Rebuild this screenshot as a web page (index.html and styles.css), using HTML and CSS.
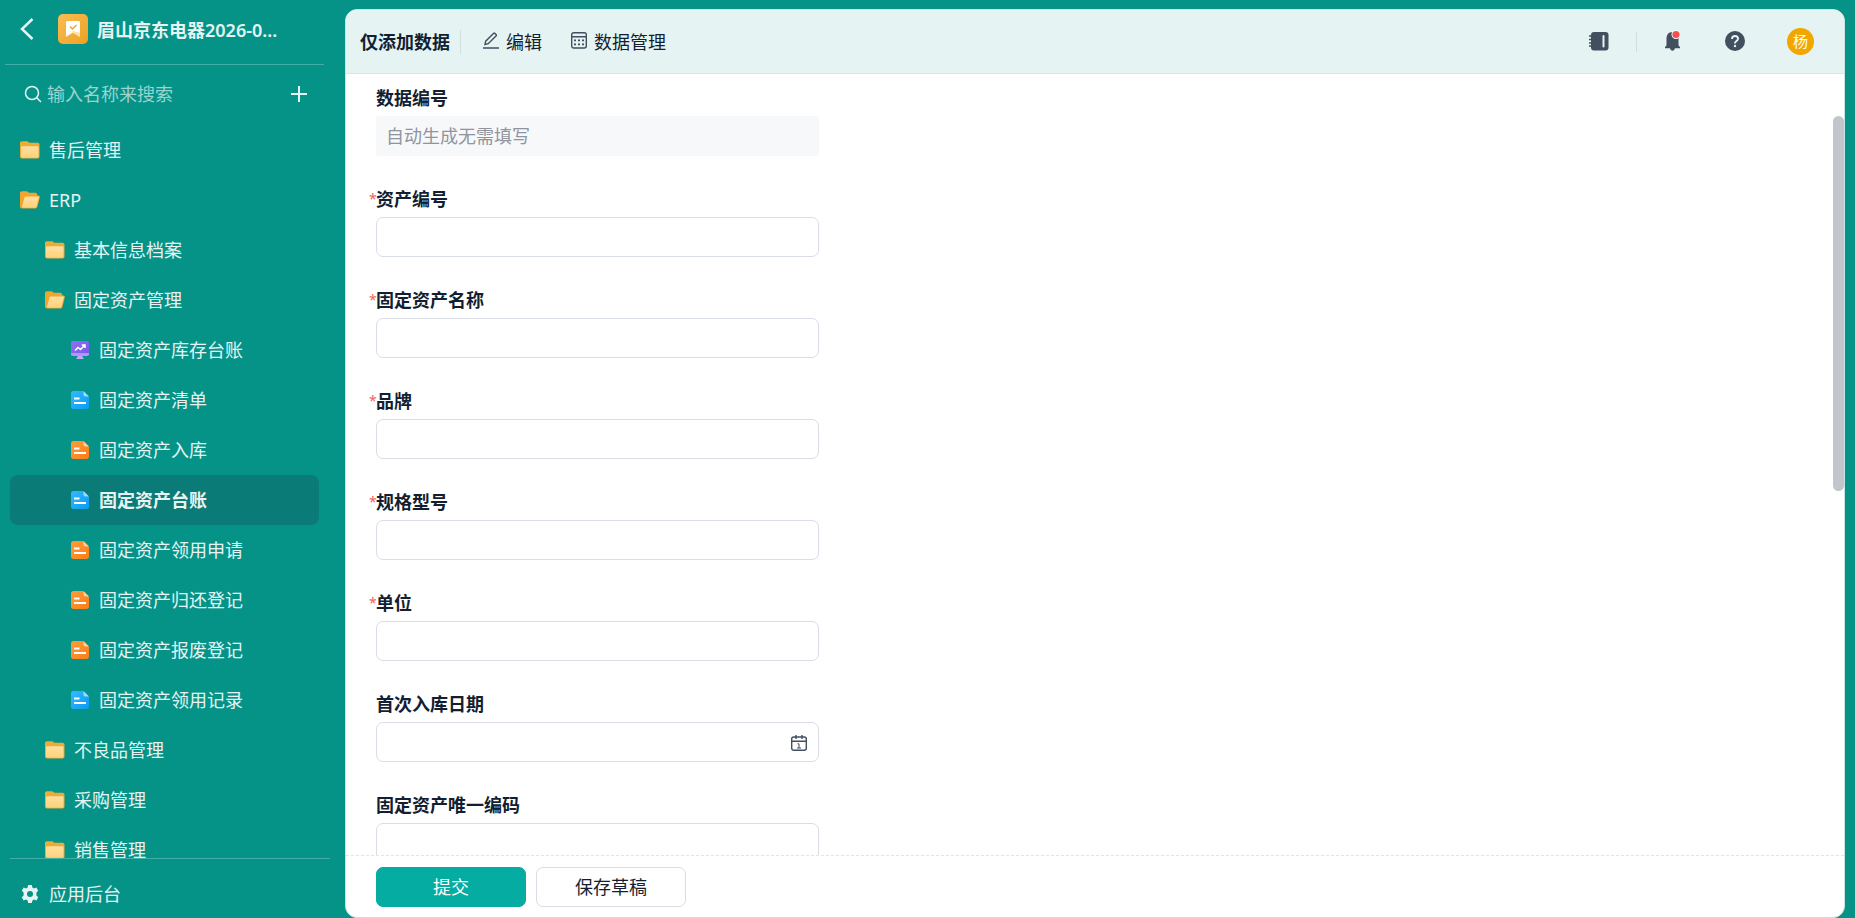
FILE: index.html
```html
<!DOCTYPE html>
<html lang="zh-CN">

<head>
    <meta charset="UTF-8" />
    <meta name="viewport" content="width=device-width, initial-scale=1.0" />
    <title>固定资产台账</title>
    <link rel="stylesheet" href="styles.css">
</head>

<body>
    <!-- shared icons -->
    <svg class="sprite" aria-hidden="true">
        <defs>
            <linearGradient id="gFolder" x1="0" y1="0" x2="0" y2="1">
                <stop offset="0" stop-color="#ffe0a0" />
                <stop offset="1" stop-color="#ffd27a" />
            </linearGradient>
            <linearGradient id="gBlue" x1="0" y1="0" x2="1" y2="1">
                <stop offset="0" stop-color="#35b9ff" />
                <stop offset="1" stop-color="#089cf0" />
            </linearGradient>
            <linearGradient id="gOrange" x1="0" y1="0" x2="1" y2="1">
                <stop offset="0" stop-color="#ff9b3d" />
                <stop offset="1" stop-color="#fb7f17" />
            </linearGradient>
            <linearGradient id="gPurple" x1="0" y1="0" x2="1" y2="1">
                <stop offset="0" stop-color="#9270f5" />
                <stop offset="1" stop-color="#7656e8" />
            </linearGradient>
            <linearGradient id="gApp" x1="0" y1="0" x2="1" y2="1">
                <stop offset="0" stop-color="#f9bd55" />
                <stop offset="1" stop-color="#eda122" />
            </linearGradient>
        </defs>
        <symbol id="folder" viewBox="0 0 20 18">
            <path d="M0 2.2C0 1 .8.3 2 .3h5c1.200 0 1.600 1.500 2.800 1.500H17.500c1.200 0 2 .8 2 2V15.500c0 1.300-.8 2-2 2H2c-1.200 0-2-.7-2-2z" fill="#f0ab35" />
            <path d="M1 6.500c0-.8.500-1.300 1.300-1.300h15c.8 0 1.200.5 1.200 1.300v9c0 .8-.5 1.200-1.200 1.200h-15c-.8 0-1.300-.4-1.300-1.200z" fill="url(#gFolder)" />
        </symbol>
        <symbol id="folder-open" viewBox="0 0 20 18">
            <path d="M0 2.2C0 1 .8.3 2 .3h4.500c1.200 0 1.600 1.500 2.800 1.500H15c1.400 0 2.200.8 2.200 2v.6h1c1.300 0 1.900.8 1.600 2l-2.400 9.300c-.3 1.200-1 1.800-2.200 1.800H2c-1.200 0-2-.7-2-2z" fill="#f0a52f" />
            <path d="M4.500 6.500c.2-.7.700-1.100 1.400-1.100h12c.8 0 1.100.5.900 1.200l-2.200 9c-.2.700-.7 1.100-1.400 1.100H3c-.9 0-1.200-.5-1-1.300z" fill="url(#gFolder)" />
        </symbol>
        <symbol id="doc-blue" viewBox="0 0 18 18">
            <path d="M2.500 0H12l6 6v9.500c0 1.500-1 2.500-2.500 2.500h-13C1 18 0 17 0 15.500v-13C0 1 1 0 2.500 0z" fill="url(#gBlue)" />
            <path d="M12.500 0L18 5.500h-3.500c-1.200 0-2-.8-2-2z" fill="#9bdcff" />
            <path d="M3 7.500h5.500M3 12h12" stroke="#fff" stroke-width="2" />
        </symbol>
        <symbol id="doc-orange" viewBox="0 0 18 18">
            <path d="M2.500 0H12l6 6v9.500c0 1.500-1 2.500-2.500 2.500h-13C1 18 0 17 0 15.500v-13C0 1 1 0 2.500 0z" fill="url(#gOrange)" />
            <path d="M12.500 0L18 5.500h-3.500c-1.200 0-2-.8-2-2z" fill="#ffd09c" />
            <path d="M3 7.500h5.500M3 12h12" stroke="#fff" stroke-width="2" />
        </symbol>
        <symbol id="board" viewBox="0 0 18 18">
            <path d="M6.500 14h5v2l1.500 2H5l1.500-2z" fill="#c0a8ff" />
            <rect width="18" height="15" rx="2" fill="url(#gPurple)" />
            <path d="M0 12h18v1c0 1.200-.8 2-2 2H2c-1.200 0-2-.8-2-2z" fill="#b294fb" />
            <path d="M4 9.500l3-3 2.500 2L14 4M10.800 4H14v3" fill="none" stroke="#fff" stroke-width="1.600" />
        </symbol>
    </svg>

    <aside class="sidebar">
        <div class="app-head">
            <button class="icon-btn back" type="button" aria-label="返回">
                <svg width="14" height="22" viewBox="0 0 14 22" fill="none" stroke="currentColor" stroke-width="2.500"><path d="M12.500 1L2 11l10.500 10" /></svg>
            </button>
            <svg class="app-icon" viewBox="0 0 30 30">
                <rect width="30" height="30" rx="5" fill="url(#gApp)" />
                <path d="M8 18h14v5l-7-4-7 4z" fill="#fbe0b0" />
                <path d="M8 8.500C8 7.500 8.500 7 9.500 7h11c1 0 1.500.5 1.500 1.500V18.500l-7-1-7 5z" fill="#fff" />
                <path d="M12 12.500l2.500 2.500 4-4" fill="none" stroke="#f0a52f" stroke-width="1.500" />
            </svg>
            <span class="app-name">眉山京东电器2026-0...</span>
        </div>
        <div class="search">
            <svg width="18" height="18" viewBox="0 0 18 18" fill="none" stroke="currentColor" stroke-width="1.500"><circle cx="8" cy="8" r="6.500" /><path d="M12.500 12.500L17 17" /></svg>
            <input type="text" placeholder="输入名称来搜索" aria-label="输入名称来搜索" />
            <button class="icon-btn" type="button" aria-label="新建">
                <svg width="16" height="16" viewBox="0 0 16 16" stroke="currentColor" stroke-width="2"><path d="M8 0v16M0 8h16" /></svg>
            </button>
        </div>
        <nav class="menu">
            <a href="#"><svg class="ico folder"><use href="#folder" /></svg>售后管理</a>
            <a href="#"><svg class="ico folder"><use href="#folder-open" /></svg>ERP</a>
            <a class="lv2" href="#"><svg class="ico folder"><use href="#folder" /></svg>基本信息档案</a>
            <a class="lv2" href="#"><svg class="ico folder"><use href="#folder-open" /></svg>固定资产管理</a>
            <a class="lv3" href="#"><svg class="ico"><use href="#board" /></svg>固定资产库存台账</a>
            <a class="lv3" href="#"><svg class="ico"><use href="#doc-blue" /></svg>固定资产清单</a>
            <a class="lv3" href="#"><svg class="ico"><use href="#doc-orange" /></svg>固定资产入库</a>
            <a class="lv3 active" href="#"><svg class="ico"><use href="#doc-blue" /></svg>固定资产台账</a>
            <a class="lv3" href="#"><svg class="ico"><use href="#doc-orange" /></svg>固定资产领用申请</a>
            <a class="lv3" href="#"><svg class="ico"><use href="#doc-orange" /></svg>固定资产归还登记</a>
            <a class="lv3" href="#"><svg class="ico"><use href="#doc-orange" /></svg>固定资产报废登记</a>
            <a class="lv3" href="#"><svg class="ico"><use href="#doc-blue" /></svg>固定资产领用记录</a>
            <a class="lv2" href="#"><svg class="ico folder"><use href="#folder" /></svg>不良品管理</a>
            <a class="lv2" href="#"><svg class="ico folder"><use href="#folder" /></svg>采购管理</a>
            <a class="lv2" href="#"><svg class="ico folder"><use href="#folder" /></svg>销售管理</a>
        </nav>
        <a class="backend" href="#">
            <svg width="18" height="18" viewBox="0 0 18 18" fill="currentColor"><path fill-rule="evenodd" d="M7.200 0h3.600l.6 2.500 1.500.9 2.500-.8 1.800 3.100L15.400 7.500v3l1.800 1.800-1.800 3.100-2.500-.8-1.500.9-.6 2.500H7.200l-.6-2.500-1.500-.9-2.500.8L.8 12.300l1.800-1.800v-3L.8 5.700l1.800-3.100 2.500.8 1.500-.9zM9 6a3 3 0 1 0 0 6 3 3 0 0 0 0-6z" /></svg>
            应用后台
        </a>
    </aside>

    <main class="panel">
        <header class="topbar">
            <h1>仅添加数据</h1>
            <button class="tool edit" type="button">
                <svg width="16" height="17" viewBox="0 0 16 17" fill="none" stroke="currentColor" stroke-width="1.400"><path d="M0 16h16M2 12.500l.7-3.300L10.500 1.400c.5-.5 1-.5 1.500 0l1 1c.5.5.5 1 0 1.500L5.200 11.700z" /></svg>
                编辑
            </button>
            <button class="tool" type="button">
                <svg width="16" height="17" viewBox="0 0 16 17" fill="none" stroke="currentColor" stroke-width="1.400"><rect x=".7" y=".7" width="14.600" height="15.300" rx="2" /><path d="M1 4.700h14" /><path d="M3 8.300h10M3 12.300h10" stroke-width="1.800" stroke-dasharray="2 2" /></svg>
                数据管理
            </button>
            <div class="actions">
                <button class="icon-btn" type="button" aria-label="通讯录">
                    <svg width="20" height="20" viewBox="0 0 20 20"><rect x="2" y="1" width="17.500" height="18.500" rx="3" fill="#424f5e" /><path d="M0 5h4M0 8.500h4M0 12h4M0 15h4" stroke="#424f5e" stroke-width="1.500" /><path d="M14.500 5v10.500" stroke="#e5f3f2" stroke-width="2" stroke-linecap="round" /></svg>
                </button>
                <span class="split"></span>
                <button class="icon-btn" type="button" aria-label="消息">
                    <svg width="16" height="21" viewBox="0 0 16 21"><path d="M7.500 2c4 0 6 2.800 6 6.500V15c0 1 1.500 1.500 1.500 2.500v.8h-5c-.3 1.400-1.300 2.400-2.500 2.400S5.300 19.700 5 18.300H0v-.8C0 16.500 1.500 16 1.500 15V8.500C1.500 4.800 3.500 2 7.500 2z" fill="#424f5e" /><circle cx="11" cy="4.500" r="4.500" fill="#f7f9f9" /><circle cx="11" cy="4.500" r="3.600" fill="#f5504f" /></svg>
                </button>
                <button class="icon-btn" type="button" aria-label="帮助">
                    <svg width="20" height="20" viewBox="0 0 20 20"><circle cx="10" cy="10" r="10" fill="#424f5e" /><path d="M7 8c0-2 1.300-3 3-3s3 1 3 2.700c0 2.200-3 2.300-3 4.500v.3" fill="none" stroke="#e5f3f2" stroke-width="1.900" /><circle cx="10" cy="15" r="1.200" fill="#e5f3f2" /></svg>
                </button>
                <button class="avatar" type="button">杨</button>
            </div>
        </header>

        <form class="form">
            <div class="body">
                <div class="fields">
                    <div class="field">
                        <label for="dataNo">数据编号</label>
                        <input id="dataNo" type="text" placeholder="自动生成无需填写" disabled />
                    </div>
                    <div class="field required">
                        <label for="assetNo">资产编号</label>
                        <input id="assetNo" type="text" />
                    </div>
                    <div class="field required">
                        <label for="assetName">固定资产名称</label>
                        <input id="assetName" type="text" />
                    </div>
                    <div class="field required">
                        <label for="brand">品牌</label>
                        <input id="brand" type="text" />
                    </div>
                    <div class="field required">
                        <label for="model">规格型号</label>
                        <input id="model" type="text" />
                    </div>
                    <div class="field required">
                        <label for="unit">单位</label>
                        <input id="unit" type="text" />
                    </div>
                    <div class="field">
                        <label for="firstDate">首次入库日期</label>
                        <div class="date">
                            <input id="firstDate" type="text" />
                            <svg width="16" height="16" viewBox="0 0 16 16" fill="none" stroke="currentColor" stroke-width="1.400"><rect x=".7" y="2" width="14.600" height="13.300" rx="2" /><path d="M5 0v4M11 0v4M1 6.200h14" /><path d="M6.500 8.800H8V13M6 13h4" stroke-width="1" /></svg>
                        </div>
                    </div>
                    <div class="field">
                        <label for="uniqueCode">固定资产唯一编码</label>
                        <input id="uniqueCode" type="text" />
                    </div>
                </div>
                <span class="thumb"></span>
            </div>
            <footer class="submit-bar">
                <button class="btn primary" type="submit">提交</button>
                <button class="btn" type="button">保存草稿</button>
            </footer>
        </form>
    </main>
</body>

</html>
```
FILE: styles.css
```css
* {
  box-sizing: border-box;
}

body {
  display: flex;
  height: 100vh;
  margin: 0;
  overflow: hidden;
  background-color: #059388;
  color: #141e31;
  font-family: "Noto Sans", "Noto Sans CJK SC", sans-serif;
  font-size: 18px;
  line-height: 24px;
}

button,
input {
  font: inherit;
  color: inherit;
}

button {
  padding: 0;
  border: none;
  background: none;
  cursor: pointer;
}

svg {
  display: block;
  flex: none;
}

a {
  color: inherit;
  text-decoration: none;
}

.sprite {
  position: absolute;
  width: 0;
  height: 0;
}

.icon-btn {
  display: flex;
}

/* sidebar */
.sidebar {
  display: flex;
  flex-direction: column;
  flex: none;
  width: 345px;
  color: #e6f4f3;
}

.app-head {
  display: flex;
  align-items: center;
  flex: none;
  height: 65px;
  margin: 0 21px 0 5px;
  padding: 0 0 6px 15px;
  border-bottom: 1px solid #43aea6;
}

.app-icon {
  width: 30px;
  height: 30px;
  margin: 0 9px 0 24px;
}

.app-name {
  padding-top: 2px;
  font-weight: 600;
  white-space: nowrap;
}

.search {
  display: flex;
  align-items: center;
  gap: 5px;
  flex: none;
  height: 60px;
  padding: 0 38px 2px 24px;
}

.search input {
  flex: 1;
  min-width: 0;
  padding: 0;
  border: none;
  outline: none;
  background: none;
}

.search input::placeholder {
  color: #9bd4cf;
  opacity: 1;
}

.menu {
  flex: 1;
  min-height: 0;
  overflow: hidden;
  padding: 0 26px 0 10px;
}

.menu a {
  display: flex;
  align-items: center;
  gap: 9px;
  height: 50px;
  padding-left: 10px;
  border-radius: 8px;
  white-space: nowrap;
}

.menu .lv2 {
  padding-left: 35px;
}

.menu .lv3 {
  gap: 10px;
  padding-left: 61px;
}

.menu .active {
  background-color: #0a7b76;
  font-weight: bold;
}

.ico {
  width: 18px;
  height: 18px;
}

.ico.folder {
  width: 20px;
}

.backend {
  display: flex;
  align-items: center;
  gap: 10px;
  flex: none;
  height: 60px;
  margin: 0 15px 0 10px;
  padding: 10px 0 0 11px;
  border-top: 1px solid #43aea6;
}

/* main panel */
.panel {
  display: flex;
  flex-direction: column;
  flex: 1;
  min-width: 0;
  margin: 9px 10px 0 0;
  border: 1px solid #c6e5e2;
  border-radius: 12px;
  overflow: hidden;
  background-color: #fff;
}

.topbar {
  display: flex;
  align-items: center;
  flex: none;
  height: 64px;
  padding: 0 30px 0 14px;
  border-bottom: 1px solid #dde3e7;
  background-color: #e5f3f2;
}

.topbar h1 {
  margin: 0;
  padding-right: 10px;
  border-right: 1px solid #d3dedf;
  font-size: 18px;
  line-height: 24px;
}

.tool {
  display: flex;
  align-items: center;
  gap: 7px;
  margin-left: 29px;
}

.tool.edit {
  margin-left: 22px;
}

.tool svg {
  margin-bottom: 2px;
  color: #424f5e;
}

.actions {
  display: flex;
  align-items: center;
  margin-left: auto;
}

.actions .icon-btn {
  padding-bottom: 2px;
}

.split {
  width: 1px;
  height: 20px;
  margin: 0 28px 0 27px;
  background-color: #d3dedf;
}

.actions .icon-btn + .icon-btn {
  margin-left: 44px;
}

.avatar {
  width: 27px;
  height: 27px;
  margin-left: 42px;
  border-radius: 50%;
  background-color: #f2a600;
  color: #fff;
  font-size: 15px;
  line-height: 27px;
}

/* form */
.form {
  display: flex;
  flex-direction: column;
  flex: 1;
  min-height: 0;
}

.body {
  position: relative;
  flex: 1;
  min-height: 0;
  overflow: hidden;
  padding: 12px 30px 0;
}

.fields {
  display: grid;
  gap: 31px;
  width: calc(30% + 12px);
}

.field label {
  display: block;
  margin-bottom: 6px;
  font-weight: bold;
}

.required label {
  position: relative;
}

.required label::before {
  content: "*";
  position: absolute;
  left: -7px;
  color: #f56060;
  font-size: 14px;
  font-weight: normal;
}

.field input {
  display: block;
  width: 100%;
  height: 40px;
  padding: 0 9px;
  border: 1px solid #d9dde5;
  border-radius: 7px;
  background-color: #fff;
}

.field input:disabled {
  border-color: #f7f8fa;
  border-radius: 2px;
  background-color: #f7f8fa;
}

.field input::placeholder {
  color: #8f949f;
  opacity: 1;
}

.date {
  position: relative;
}

.date svg {
  position: absolute;
  top: 13px;
  right: 12px;
  color: #424f5e;
}

/* scroll thumb over the right edge */
.thumb {
  position: absolute;
  top: 42px;
  right: 0;
  width: 11px;
  height: 48%;
  border-radius: 6px;
  background-color: #c1c5cc;
}

.submit-bar {
  display: flex;
  gap: 10px;
  flex: none;
  padding: 11px 30px 10px;
  border-top: 1px dashed #e2e4e7;
}

.btn {
  width: 150px;
  height: 40px;
  border: 1px solid #d9dde5;
  border-radius: 7px;
  background-color: #fff;
}

.btn.primary {
  border-color: #04aca1;
  background-color: #04aca1;
  color: #fff;
}
```
